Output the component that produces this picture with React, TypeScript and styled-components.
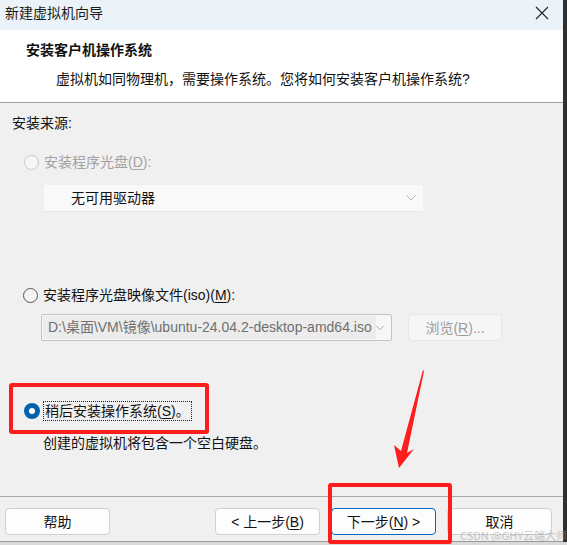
import React from "react";
import styled, { createGlobalStyle } from "styled-components";

const Global = createGlobalStyle`
  html, body { margin: 0; padding: 0; background: #2f2f2f; }
  body { font-family: "Liberation Sans", "Noto Sans CJK SC", sans-serif; }
`;

const Screen = styled.div`
  position: relative;
  width: 567px;
  height: 545px;
  overflow: hidden;
  background: #2f2f2f;
`;

const Window = styled.div`
  width: 563px;
  height: 541px;
  display: flex;
  flex-direction: column;
  background: #f0f0f0;
  border-bottom: 1px solid #9a9a9a;
  font-size: 14px;
  color: #111;
`;

const BottomStrip = styled.div`
  height: 3px;
  width: 567px;
  background: #dadada;
`;

const TitleBar = styled.div`
  height: 30px;
  background: #ebf3f8;
  display: flex;
  align-items: center;
  justify-content: space-between;
  padding: 0 14px 0 5px;
  line-height: 20px;
`;

const TitleText = styled.span`
  font-size: 14px;
  color: #1a1a1a;
  margin-top: -5px;
`;

const CloseIcon = styled.svg`
  width: 14px;
  height: 14px;
  margin-top: -4px;
`;

const Header = styled.div`
  height: 73px;
  background: #ffffff;
  border-bottom: 1px solid #a0a0a0;
  display: flex;
  flex-direction: column;
  padding: 10px 0 0 26px;
  box-sizing: border-box;
`;

const HeaderTitle = styled.div`
  font-weight: 700;
  font-size: 14px;
  line-height: 20px;
`;

const HeaderSub = styled.div`
  padding-left: 30px;
  margin-top: 9px;
  line-height: 20px;
`;

const Body = styled.div`
  flex: 1;
  display: flex;
  flex-direction: column;
  padding: 10px 0 0 12px;
  line-height: 20px;
`;

const Label = styled.div<{ $top?: number; $indent?: number; $muted?: boolean }>`
  margin-top: ${(p) => p.$top ?? 0}px;
  padding-left: ${(p) => p.$indent ?? 0}px;
  color: ${(p) => (p.$muted ? "#a2a2a2" : "#111")};
`;

const RadioRow = styled.div<{ $top: number; $left: number }>`
  display: flex;
  align-items: center;
  margin-top: ${(p) => p.$top}px;
  margin-left: ${(p) => p.$left}px;
  height: 20px;
`;

const RadioCircle = styled.span<{ $state: "disabled" | "off" | "on" }>`
  box-sizing: border-box;
  width: ${(p) => (p.$state === "on" ? 16 : 15)}px;
  height: ${(p) => (p.$state === "on" ? 16 : 15)}px;
  border-radius: 50%;
  flex-shrink: 0;
  border: ${(p) =>
    p.$state === "on"
      ? "5px solid #0062ad"
      : p.$state === "disabled"
      ? "1px solid #c9c9c9"
      : "1px solid #555"};
  background: ${(p) => (p.$state === "on" ? "#fff" : p.$state === "disabled" ? "#f6f6f6" : "#f3f3f3")};
`;

const RadioLabel = styled.span<{ $muted?: boolean; $focus?: boolean }>`
  margin-left: ${(p) => (p.$focus ? 4 : 5)}px;
  color: ${(p) => (p.$muted ? "#a2a2a2" : "#111")};
  outline: ${(p) => (p.$focus ? "1px dotted #222" : "none")};
  padding: 0 ${(p) => (p.$focus ? 1 : 0)}px;
  line-height: 18px;
`;

const U = styled.span`
  text-decoration: underline;
  text-underline-offset: 2px;
`;

const DisabledSelect = styled.div`
  margin: 13px 0 0 32px;
  width: 379px;
  height: 27px;
  box-sizing: border-box;
  background: #f9f9f9;
  border-bottom: 1px solid #e8e8e8;
  display: flex;
  align-items: center;
  justify-content: space-between;
  padding: 0 7px 0 27px;
  color: #111;
`;

const Chevron = styled.svg`
  width: 10px;
  height: 6px;
`;

const ComboRow = styled.div`
  display: flex;
  align-items: center;
  margin: 9px 0 0 29px;
  gap: 16px;
`;

const Combo = styled.div`
  width: 351px;
  height: 27px;
  box-sizing: border-box;
  border: 1px solid #c4c4c4;
  border-radius: 2px;
  background: #f7f7f7;
  display: flex;
  align-items: center;
  justify-content: space-between;
  padding: 0 7px 0 1px;
`;

const ComboText = styled.span`
  background: #ececec;
  color: #6f6f6f;
  height: 23px;
  line-height: 23px;
  padding: 0 4px 0 5px;
  white-space: nowrap;
`;

const Button = styled.button<{ $primary?: boolean; $disabled?: boolean; $w?: number }>`
  box-sizing: border-box;
  width: ${(p) => p.$w ?? 105}px;
  height: 27px;
  border-radius: 4px;
  border: 1px solid ${(p) => (p.$primary ? "#0067c0" : p.$disabled ? "#e6e6e6" : "#d0d0d0")};
  background: ${(p) => (p.$disabled ? "#f6f6f6" : "#fdfdfd")};
  color: ${(p) => (p.$disabled ? "#9c9c9c" : "#111")};
  font-family: inherit;
  font-size: 14px;
  line-height: 20px;
  padding: 0;
`;

const Footer = styled.div`
  height: 45px;
  border-top: 1px solid #a8a8a8;
  display: flex;
  align-items: flex-start;
  padding: 11px 11px 0 5px;
  box-sizing: border-box;
`;

const Spacer = styled.div`
  flex: 1;
`;

const ButtonGroup = styled.div`
  display: flex;
  gap: 11px;
`;

const Highlight = styled.div<{ $x: number; $y: number; $w: number; $h: number }>`
  position: absolute;
  left: ${(p) => p.$x}px;
  top: ${(p) => p.$y}px;
  width: ${(p) => p.$w}px;
  height: ${(p) => p.$h}px;
  box-sizing: border-box;
  border: 4px solid #ff1c1c;
  border-radius: 3px;
  pointer-events: none;
`;

const ArrowSvg = styled.svg`
  position: absolute;
  left: 385px;
  top: 365px;
  width: 50px;
  height: 110px;
  pointer-events: none;
`;

const Watermark = styled.div`
  position: absolute;
  left: 460px;
  top: 529px;
  font-size: 11px;
  line-height: 12px;
  color: rgba(150, 150, 150, 0.5);
  white-space: nowrap;
  font-family: "Noto Sans CJK SC", "Noto Sans", sans-serif;
`;

export default function App() {
  return (
    <Screen>
      <Global />
      <Window>
        <TitleBar>
          <TitleText>新建虚拟机向导</TitleText>
          <CloseIcon viewBox="0 0 14 14">
            <path d="M1 1 L13 13 M13 1 L1 13" stroke="#222" strokeWidth="1.1" fill="none" />
          </CloseIcon>
        </TitleBar>
        <Header>
          <HeaderTitle>安装客户机操作系统</HeaderTitle>
          <HeaderSub>虚拟机如同物理机，需要操作系统。您将如何安装客户机操作系统?</HeaderSub>
        </Header>
        <Body>
          <Label>安装来源:</Label>
          <RadioRow $top={19} $left={12}>
            <RadioCircle $state="disabled" />
            <RadioLabel $muted>
              安装程序光盘(<U>D</U>):
            </RadioLabel>
          </RadioRow>
          <DisabledSelect>
            <span>无可用驱动器</span>
            <Chevron viewBox="0 0 10 6">
              <path d="M0.5 0.5 L5 5 L9.5 0.5" stroke="#b5b5b5" strokeWidth="1" fill="none" />
            </Chevron>
          </DisabledSelect>
          <RadioRow $top={73} $left={11}>
            <RadioCircle $state="off" />
            <RadioLabel>
              安装程序光盘映像文件(iso)(<U>M</U>):
            </RadioLabel>
          </RadioRow>
          <ComboRow>
            <Combo>
              <ComboText>D:\桌面\VM\镜像\ubuntu-24.04.2-desktop-amd64.iso</ComboText>
              <Chevron viewBox="0 0 10 6">
                <path d="M0.5 0.5 L5 5 L9.5 0.5" stroke="#9a9a9a" strokeWidth="1" fill="none" />
              </Chevron>
            </Combo>
            <Button $disabled $w={94}>
              浏览(<U>R</U>)...
            </Button>
          </ComboRow>
          <RadioRow $top={60} $left={12}>
            <RadioCircle $state="on" />
            <RadioLabel $focus>
              稍后安装操作系统(<U>S</U>)。
            </RadioLabel>
          </RadioRow>
          <Label $top={12} $indent={31}>
            创建的虚拟机将包含一个空白硬盘。
          </Label>
        </Body>
        <Footer>
          <Button>帮助</Button>
          <Spacer />
          <ButtonGroup>
            <Button>
              &lt; 上一步(<U>B</U>)
            </Button>
            <Button $primary>
              下一步(<U>N</U>) &gt;
            </Button>
            <Button>取消</Button>
          </ButtonGroup>
        </Footer>
      </Window>
      <BottomStrip />
      <Highlight $x={9} $y={383} $w={200} $h={51} />
      <Highlight $x={328} $y={483} $w={124} $h={61} />
      <ArrowSvg viewBox="0 0 50 110">
        <polygon points="38,5 39,6 22,88 29,84 14,103 9,80 16,86" fill="#ff1c1c" />
      </ArrowSvg>
      <Watermark>CSDN @GHY云端大师</Watermark>
    </Screen>
  );
}
